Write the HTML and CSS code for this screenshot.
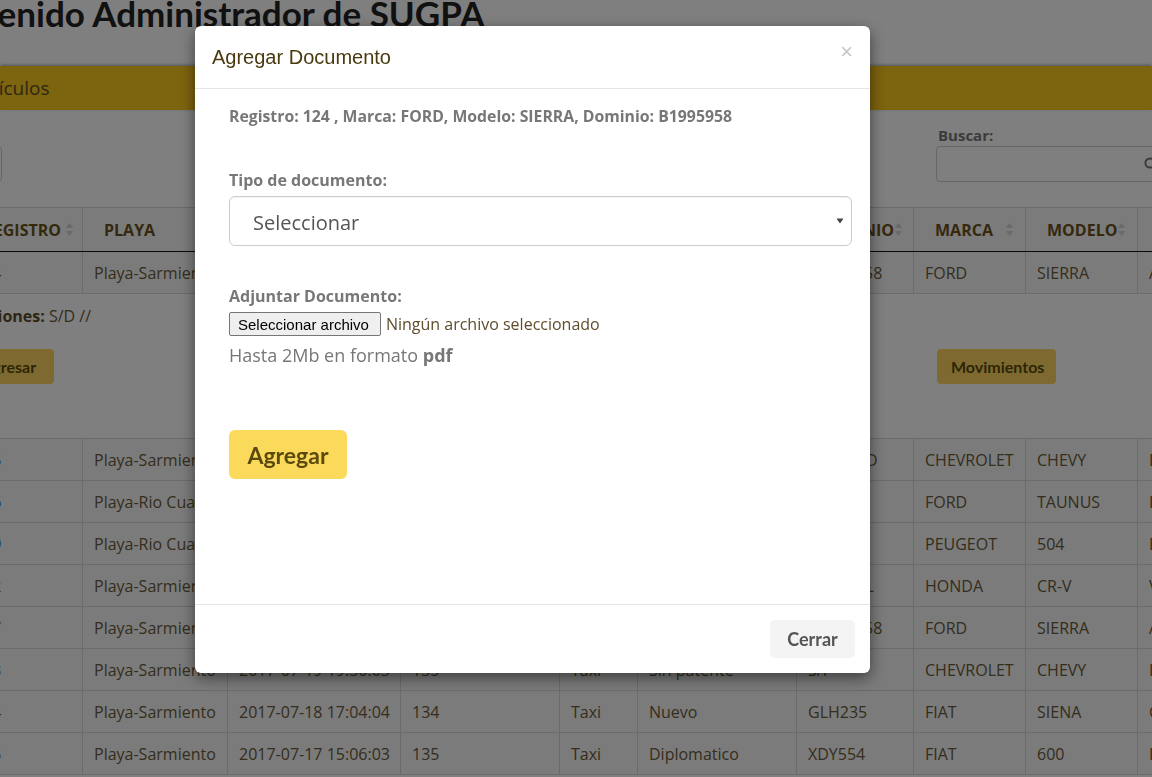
FILE: index.html
```html
<!DOCTYPE html>
<html lang="es">
<head>
<meta charset="utf-8">
<title>SUGPA - Agregar Documento</title>
<link rel="stylesheet" href="styles.css">
</head>
<body>
<div class="page">
  <header class="site-header">
    <h1 class="site-title">Bienvenido Administrador de SUGPA</h1>
  </header>
  <nav class="navbar">
    <a class="nav-link">Vehículos</a>
  </nav>
  <main class="content">
    <div class="tools">
      <div class="length-box"></div>
      <div class="search">
        <span class="search-label">Buscar:</span>
        <div class="search-input">
          <svg class="search-icon" viewBox="0 0 14 14" width="14" height="14"><circle cx="6" cy="6" r="4.6" fill="none" stroke="#777" stroke-width="2"/><path d="M9.5 9.5 L13 13" stroke="#777" stroke-width="2" stroke-linecap="round"/></svg>
        </div>
      </div>
    </div>

    <table class="grid grid-main">
      <colgroup>
        <col class="c1"><col class="c2"><col class="c3"><col class="c4"><col class="c5"><col class="c6"><col class="c7"><col class="c8"><col class="c9"><col class="c10">
      </colgroup>
      <thead>
        <tr>
          <th class="th-first"><div class="th-in th-end"><span>REGISTRO</span><svg class="sort" viewBox="0 0 8 14" width="9" height="15"><path d="M4 1 L7.5 5.5 H0.5Z M4 13 L0.5 8.5 H7.5Z" fill="#d4d4d4"/></svg></div></th>
          <th><div class="th-in"><span>PLAYA</span></div></th>
          <th><div class="th-in"><span>FECHA</span><svg class="sort" viewBox="0 0 8 14" width="9" height="15"><path d="M4 1 L7.5 5.5 H0.5Z M4 13 L0.5 8.5 H7.5Z" fill="#d4d4d4"/></svg></div></th>
          <th><div class="th-in"><span>ACTA</span><svg class="sort" viewBox="0 0 8 14" width="9" height="15"><path d="M4 1 L7.5 5.5 H0.5Z M4 13 L0.5 8.5 H7.5Z" fill="#d4d4d4"/></svg></div></th>
          <th><div class="th-in"><span>TIPO</span></div></th>
          <th><div class="th-in"><span>ESTADO</span><svg class="sort" viewBox="0 0 8 14" width="9" height="15"><path d="M4 1 L7.5 5.5 H0.5Z M4 13 L0.5 8.5 H7.5Z" fill="#d4d4d4"/></svg></div></th>
          <th><div class="th-in"><span>DOMINIO</span><svg class="sort" viewBox="0 0 8 14" width="9" height="15"><path d="M4 1 L7.5 5.5 H0.5Z M4 13 L0.5 8.5 H7.5Z" fill="#d4d4d4"/></svg></div></th>
          <th><div class="th-in"><span>MARCA</span><svg class="sort" viewBox="0 0 8 14" width="9" height="15"><path d="M4 1 L7.5 5.5 H0.5Z M4 13 L0.5 8.5 H7.5Z" fill="#d4d4d4"/></svg></div></th>
          <th><div class="th-in"><span>MODELO</span><svg class="sort" viewBox="0 0 8 14" width="9" height="15"><path d="M4 1 L7.5 5.5 H0.5Z M4 13 L0.5 8.5 H7.5Z" fill="#d4d4d4"/></svg></div></th>
          <th><div class="th-in"><span>COLOR</span></div></th>
        </tr>
      </thead>
      <tbody>
        <tr><td>124</td><td>Playa-Sarmiento</td><td>2017-07-20 10:12:45</td><td>136</td><td>Particular</td><td>Secuestrado</td><td>B1995958</td><td>FORD</td><td>SIERRA</td><td>Azul</td></tr>
      </tbody>
    </table>

    <p class="obs"><b>Observaciones:</b> S/D //</p>

    <div class="actions">
      <button class="btn-yellow btn-back">Regresar</button>
      <button class="btn-yellow btn-mov">Movimientos</button>
    </div>

    <table class="grid grid-list">
      <colgroup>
        <col class="c1"><col class="c2"><col class="c3"><col class="c4"><col class="c5"><col class="c6"><col class="c7"><col class="c8"><col class="c9"><col class="c10">
      </colgroup>
      <tbody>
        <tr><td class="lnk">125</td><td>Playa-Sarmiento</td><td>2017-07-21 09:15:22</td><td>137</td><td>Particular</td><td>Nuevo</td><td>AB123CD</td><td>CHEVROLET</td><td>CHEVY</td><td>Blanco</td></tr>
        <tr><td class="lnk">126</td><td>Playa-Rio Cuarto</td><td>2017-07-20 16:40:10</td><td>138</td><td>Particular</td><td>Usado</td><td>RTA452</td><td>FORD</td><td>TAUNUS</td><td>Beige</td></tr>
        <tr><td class="lnk">129</td><td>Playa-Rio Cuarto</td><td>2017-07-20 11:22:31</td><td>139</td><td>Particular</td><td>Usado</td><td>SXC912</td><td>PEUGEOT</td><td>504</td><td>Blanco</td></tr>
        <tr><td>132</td><td>Playa-Sarmiento</td><td>2017-07-19 21:05:47</td><td>140</td><td>Particular</td><td>Nuevo</td><td>AC301KL</td><td>HONDA</td><td>CR-V</td><td>Verde</td></tr>
        <tr><td>127</td><td>Playa-Sarmiento</td><td>2017-07-19 20:11:09</td><td>136</td><td>Particular</td><td>Usado</td><td>B1995958</td><td>FORD</td><td>SIERRA</td><td>Azul</td></tr>
        <tr><td>133</td><td>Playa-Sarmiento</td><td>2017-07-19 19:30:03</td><td>135</td><td>Taxi</td><td>Sin patente</td><td>S/P</td><td>CHEVROLET</td><td>CHEVY</td><td>Blanco</td></tr>
        <tr><td>134</td><td>Playa-Sarmiento</td><td>2017-07-18 17:04:04</td><td>134</td><td>Taxi</td><td>Nuevo</td><td>GLH235</td><td>FIAT</td><td>SIENA</td><td>Gris</td></tr>
        <tr><td>135</td><td>Playa-Sarmiento</td><td>2017-07-17 15:06:03</td><td>135</td><td>Taxi</td><td>Diplomatico</td><td>XDY554</td><td>FIAT</td><td>600</td><td>Blanco</td></tr>
      </tbody>
    </table>
  </main>
</div>

<div class="backdrop"></div>

<div class="modal" role="dialog">
  <div class="modal-header">
    <h4 class="modal-title">Agregar Documento</h4>
    <button class="close" type="button">×</button>
  </div>
  <div class="modal-body">
    <p class="info">Registro: 124 , Marca: FORD, Modelo: SIERRA, Dominio: B1995958</p>
    <label class="field-label">Tipo de documento:</label>
    <div class="select">
      <span>Seleccionar</span>
      <svg class="caret" viewBox="0 0 8 6" width="8" height="6"><path d="M0.5 0.5 H7.5 L4 5.5Z" fill="#444"/></svg>
    </div>
    <label class="field-label field-gap">Adjuntar Documento:</label>
    <div class="file-row">
      <span class="file-btn">Seleccionar archivo</span>
      <span class="file-name">Ningún archivo seleccionado</span>
    </div>
    <p class="hint">Hasta 2Mb en formato <b>pdf</b></p>
    <button class="btn-add" type="button">Agregar</button>
  </div>
  <div class="modal-footer">
    <button class="btn-close" type="button">Cerrar</button>
  </div>
</div>
</body>
</html>
```

FILE: styles.css
```css
html, body {
  margin: 0;
  padding: 0;
}
body {
  overflow: hidden;
  background: #fff;
  font-family: "Open Sans", "Liberation Sans", sans-serif;
  color: #5e4d2a;
  width: 1152px;
  height: 777px;
}

.page {
  width: 1152px;
}

.site-header {
  height: 66px;
  overflow: hidden;
}
.site-title {
  margin: -9px 0 0 -90px;
  font: 700 35px/44px "Lato", sans-serif;
  color: #222;
  white-space: nowrap;
}

.navbar {
  height: 44px;
  background: #fac81c;
  box-shadow: 0 -1px 3px rgba(0, 0, 0, 0.35);
  display: flex;
  align-items: center;
}
.nav-link {
  margin-left: -35px;
  font-size: 19px;
  color: #5e4d2a;
}

.tools {
  display: flex;
  align-items: flex-end;
  padding-top: 15px;
}
.length-box {
  width: 82px;
  height: 36px;
  margin-left: -80px;
  border: 1px solid #ccc;
  border-radius: 4px;
  box-sizing: border-box;
}
.search {
  margin-left: auto;
  margin-right: -24px;
  width: 240px;
  display: flex;
  flex-direction: column;
}
.search-label {
  font-weight: 700;
  font-size: 15px;
  line-height: 21px;
  color: #777;
  padding-left: 2px;
}
.search-input {
  height: 36px;
  box-sizing: border-box;
  border: 1px solid #ccc;
  border-radius: 4px;
  display: flex;
  align-items: center;
  justify-content: flex-end;
  padding-right: 17px;
}

.grid {
  border-collapse: collapse;
  table-layout: fixed;
  width: 1295px;
  margin-left: -38px;
  font-size: 16px;
}
.c1 { width: 120px; }
.c2 { width: 145px; }
.c3 { width: 173px; }
.c4 { width: 159px; }
.c5 { width: 78px; }
.c6 { width: 159px; }
.c7 { width: 117px; }
.c8 { width: 112px; }
.c9 { width: 112px; }
.c10 { width: 120px; }

.grid-main {
  margin-top: 25px;
}
.grid th,
.grid td {
  border: 1px solid #d6d6d6;
  background: #f7f7f7;
  white-space: nowrap;
  overflow: hidden;
  text-align: left;
}
.grid th {
  height: 43px;
  padding: 0 11px 0 21px;
  font-weight: 700;
  color: #6a531a;
  border-bottom: 1px solid #111;
}
.grid th.th-first {
  padding-right: 8px;
}
.th-in {
  display: flex;
  align-items: center;
  justify-content: space-between;
}
.th-end {
  justify-content: flex-end;
  gap: 4px;
}
.sort {
  flex: none;
}
.grid td {
  height: 41px;
  padding: 0 11px;
  color: #6a5a3a;
}
.grid td.lnk {
  color: #2a6db5;
}

.obs {
  margin: 11px 0 0 -77px;
  font-size: 16px;
  line-height: 23px;
  color: #6a5a3a;
}
.obs b {
  color: #5e4d2a;
}

.actions {
  margin-top: 21px;
  display: flex;
}
.btn-yellow {
  height: 35px;
  padding: 0 14px;
  border: none;
  border-radius: 4px;
  background: #fdd560;
  font: 700 16px "Lato", sans-serif;
  color: #5a4a0e;
}
.btn-back {
  margin-left: -40px;
  padding-right: 18px;
}
.btn-mov {
  margin-left: auto;
  margin-right: 96px;
  width: 119px;
}

.grid-list {
  margin-top: 54px;
}

/* modal */
.backdrop {
  position: fixed;
  inset: 0;
  background: rgba(0, 0, 0, 0.5);
}
.modal {
  position: fixed;
  left: 195px;
  top: 26px;
  width: 675px;
  background: #fff;
  border-radius: 6px;
  box-shadow: 0 5px 15px rgba(0, 0, 0, 0.5);
}
.modal-header {
  display: flex;
  justify-content: space-between;
  align-items: flex-start;
  padding: 18px 17px 18px 17px;
  border-bottom: 1px solid #e5e5e5;
}
.modal-title {
  margin: 0;
  font: 20px/26px "Liberation Sans", Arial, sans-serif;
  color: #4a3a10;
}
.close {
  border: none;
  background: none;
  padding: 0;
  margin-top: -3px;
  font: 400 22px/22px "Liberation Sans", Arial, sans-serif;
  color: #c6c6c6;
}
.modal-body {
  padding: 17px 18px 125px 34px;
}
.info {
  margin: 0;
  font-weight: 700;
  font-size: 15.8px;
  line-height: 21px;
  color: #777;
}
.field-label {
  display: block;
  margin-top: 43px;
  font-weight: 700;
  font-size: 16px;
  line-height: 21px;
  color: #777;
}
.field-gap {
  margin-top: 40px;
}
.select {
  margin-top: 5px;
  height: 50px;
  box-sizing: border-box;
  border: 1px solid #ccc;
  border-radius: 6px;
  box-shadow: inset 0 1px 1px rgba(0, 0, 0, 0.05);
  display: flex;
  align-items: center;
  justify-content: space-between;
  padding: 3px 7px 0 23px;
  font-size: 20px;
  color: #555;
}
.caret {
  margin-top: -3px;
}
.file-row {
  margin-top: 5px;
  display: flex;
  align-items: center;
  height: 24px;
}
.file-btn {
  height: 24px;
  box-sizing: border-box;
  display: flex;
  align-items: center;
  padding: 0 11px 0 8px;
  border: 1px solid #767676;
  border-radius: 2px;
  background: #efefef;
  font: 15px "Liberation Sans", Arial, sans-serif;
  color: #000;
}
.file-name {
  margin-left: 5px;
  font-size: 16px;
  color: #5e4d2a;
}
.hint {
  margin: 7px 0 0;
  font-size: 18px;
  line-height: 24px;
  color: #777;
}
.btn-add {
  display: block;
  margin-top: 63px;
  width: 118px;
  height: 49px;
  border: none;
  border-radius: 6px;
  background: #fbd95b;
  font: 700 23px "Lato", sans-serif;
  color: #5a4a0e;
}
.modal-footer {
  padding: 15px;
  border-top: 1px solid #e5e5e5;
  display: flex;
  justify-content: flex-end;
}
.btn-close {
  width: 85px;
  height: 38px;
  border: none;
  border-radius: 5px;
  background: #f4f4f4;
  font: 700 18px "Lato", sans-serif;
  color: #555;
}
```
